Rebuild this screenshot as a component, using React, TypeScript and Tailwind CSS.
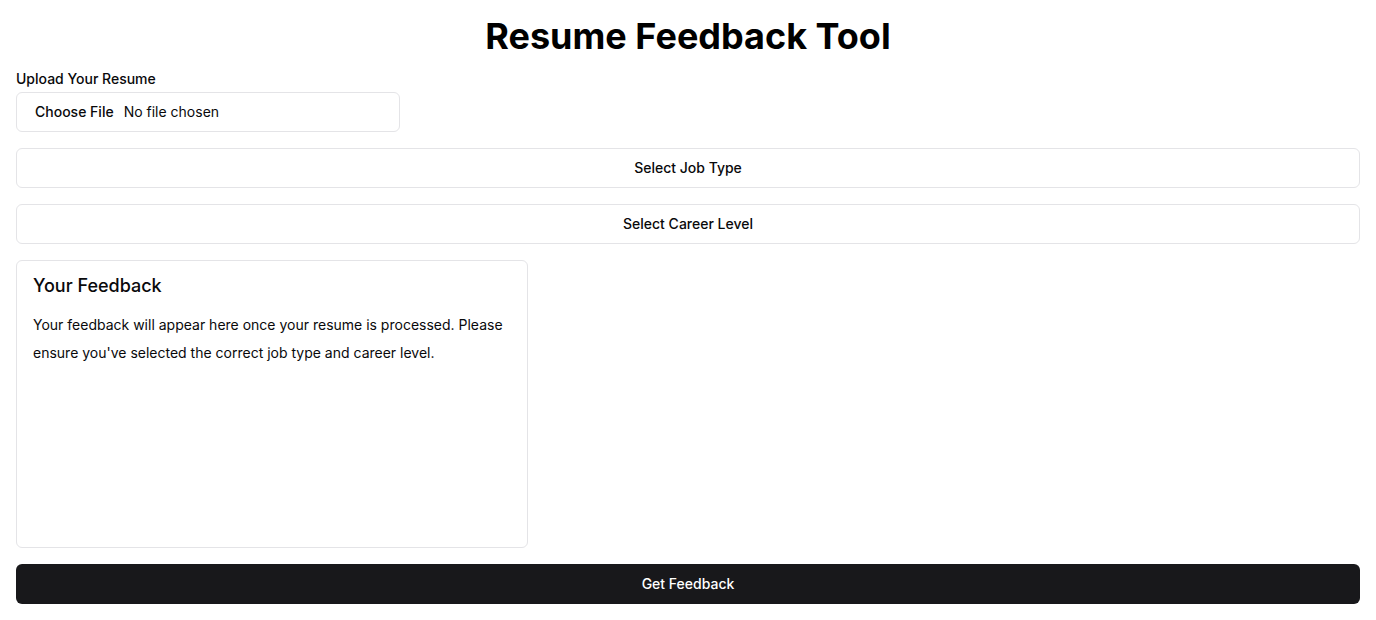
export default function App() {
  return (
    <div className="min-h-screen bg-white p-4 text-[#09090b]" style={{ fontFamily: 'Inter, "Noto Sans", sans-serif' }}>
      <div className="flex flex-col gap-4">
        <h1 className="text-center text-4xl font-bold leading-10 text-black">Resume Feedback Tool</h1>

        <div className="flex flex-col gap-1.5">
          <label htmlFor="resume" className="text-sm font-medium leading-none">
            Upload Your Resume
          </label>
          <label
            htmlFor="resume"
            className="flex h-10 w-96 cursor-pointer items-center gap-[10px] rounded-md border border-[#e4e4e7] bg-white pl-[18px] text-sm"
          >
            <span className="font-medium">Choose File</span>
            <span>No file chosen</span>
            <input id="resume" type="file" className="hidden" />
          </label>
        </div>

        <button className="h-10 w-full rounded-md border border-[#e4e4e7] bg-white text-sm font-medium">
          Select Job Type
        </button>
        <button className="h-10 w-full rounded-md border border-[#e4e4e7] bg-white text-sm font-medium">
          Select Career Level
        </button>

        <div className="h-72 w-[512px] rounded-md border border-[#e4e4e7] bg-white p-4">
          <h2 className="text-lg font-medium leading-none">Your Feedback</h2>
          <p className="mt-4 text-sm leading-7">
            Your feedback will appear here once your resume is processed. Please ensure you've selected the correct job
            type and career level.
          </p>
        </div>

        <button className="h-10 w-full rounded-md bg-[#18181b] text-sm font-medium text-white">Get Feedback</button>
      </div>
    </div>
  );
}
